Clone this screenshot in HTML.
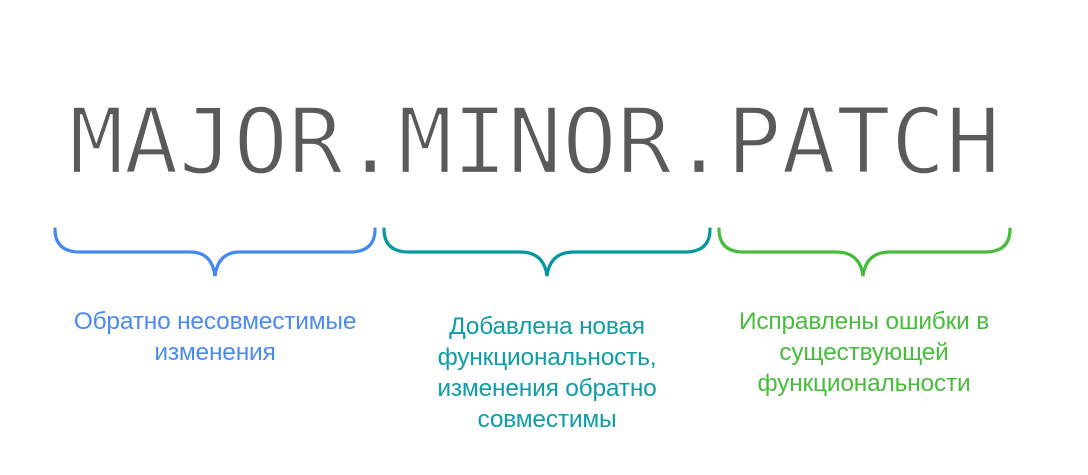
<!DOCTYPE html>
<html><head><meta charset="utf-8"><style>
html,body{margin:0;padding:0;background:#fff;width:1088px;height:475px;overflow:hidden;position:relative}
.t{position:absolute;left:69px;top:88px;font-family:"DejaVu Sans Mono","Liberation Mono",monospace;font-size:91px;color:#5a5a5a;white-space:nowrap;line-height:110px;-webkit-text-stroke:2.2px #fff}
.d{position:absolute;font-family:"Liberation Sans","DejaVu Sans",sans-serif;font-size:24.5px;line-height:31px;text-align:center;width:380px;letter-spacing:-0.2px}
</style></head><body>
<div class="t">MAJOR.MINOR.PATCH</div>
<svg width="1088" height="475" style="position:absolute;left:0;top:0" fill="none" stroke-width="3.2" stroke-linecap="round">
<path d="M55,229 Q55,252 80,252 L190,252 Q212,252 215,276 Q218,252 240,252 L350,252 Q375,252 375,229" stroke="#4688f1"/>
<path d="M384,229 Q384,252 409,252 L520,252 Q544,252 547,276 Q550,252 574,252 L685,252 Q710,252 710,229" stroke="#05979f"/>
<path d="M719,229 Q719,252 744,252 L836,252 Q860,252 863,276 Q866,252 890,252 L985,252 Q1010,252 1010,229" stroke="#46bc3a"/>
</svg>
<div class="d" style="left:25px;top:306px;color:#4a8af2">Обратно несовместимые<br>изменения</div>
<div class="d" style="left:357px;top:311px;color:#0f9ca8">Добавлена новая<br>функциональность,<br>изменения обратно<br>совместимы</div>
<div class="d" style="left:674px;top:306px;color:#48bd3b">Исправлены ошибки в<br>существующей<br>функциональности</div>
</body></html>
